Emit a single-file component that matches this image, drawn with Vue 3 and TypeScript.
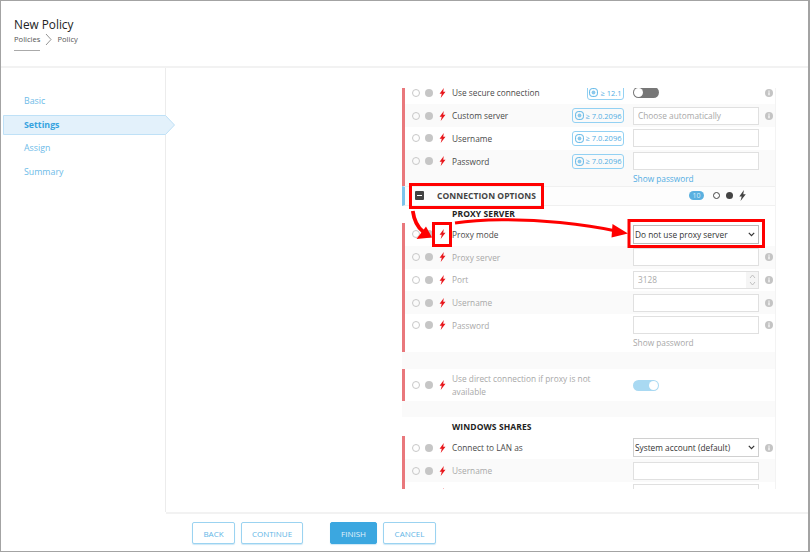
<script setup lang="ts">
interface Row {
  label: string
  muted?: boolean
  version?: string
  kind?: 'toggle-off' | 'placeholder' | 'input' | 'number' | 'select'
  value?: string
  info?: boolean
}

const nav: string[] = ['Basic', 'Settings', 'Assign', 'Summary']

const topRows: Row[] = [
  { label: 'Use secure connection', version: '≥ 12.1', kind: 'toggle-off', info: true },
  { label: 'Custom server', version: '≥ 7.0.2096', kind: 'placeholder', value: 'Choose automatically', info: true },
  { label: 'Username', version: '≥ 7.0.2096', kind: 'input' },
  { label: 'Password', version: '≥ 7.0.2096', kind: 'input' },
]

const proxyRows: Row[] = [
  { label: 'Proxy mode', kind: 'select', value: 'Do not use proxy server' },
  { label: 'Proxy server', muted: true, kind: 'input', info: true },
  { label: 'Port', muted: true, kind: 'number', value: '3128', info: true },
  { label: 'Username', muted: true, kind: 'input', info: true },
  { label: 'Password', muted: true, kind: 'input', info: true },
]

const shareRows: Row[] = [
  { label: 'Connect to LAN as', kind: 'select', value: 'System account (default)', info: true },
  { label: 'Username', muted: true, kind: 'input' },
  { label: 'Password', muted: true, kind: 'input' },
]
</script>

<template>
  <div class="window">
    <header class="head">
      <h1 class="title">New Policy</h1>
      <div class="crumbs">
        <span class="crumb-current">Policies</span>
        <svg class="crumb-sep" width="7" height="13" viewBox="0 0 7 13"><path d="M1 1 6 6.500 1 12" fill="none" stroke="#777" stroke-width=".8" /></svg>
        <span>Policy</span>
      </div>
    </header>

    <div class="middle">
      <nav class="side">
        <div v-for="item in nav" :key="item" class="nav-item" :class="{ active: item === 'Settings' }">
          <svg v-if="item === 'Settings'" class="nav-shape" width="173" height="20" viewBox="0 0 173 20">
            <path d="M.5.5H162.500L171.500 10 162.500 19.500H.5Z" fill="#e3f1fb" stroke="#bfe1f7" />
          </svg>
          <span class="nav-text">{{ item }}</span>
        </div>
      </nav>

      <main class="content">
        <section class="panel">
          <div class="scroller">
            <div class="group">
              <div v-for="(r, i) in topRows" :key="r.label" class="row" :class="{ alt: i % 2 === 1 }">
                <span class="radio"></span><span class="dot"></span>
                <svg class="bolt" width="7" height="10" viewBox="0 0 7 11"><path d="M4.900 0 .3 6.400H2.700L1.500 11 6.800 4.200H4.300Z" fill="#e8171c" /></svg>
                <span class="label">{{ r.label }}</span>
                <span class="version-slot">
                  <span class="version">
                    <svg width="9" height="9" viewBox="0 0 9 9"><rect x=".6" y=".6" width="7.800" height="7.800" rx="2.600" fill="none" stroke="#5ab4e6" /><circle cx="4.500" cy="4.500" r="1.900" fill="#8cc9ec" /></svg>
                    {{ r.version }}
                  </span>
                </span>
                <span class="value">
                  <span v-if="r.kind === 'toggle-off'" class="toggle off"><i></i></span>
                  <input v-else-if="r.kind === 'placeholder'" class="field" :placeholder="r.value" />
                  <input v-else class="field" />
                </span>
                <span class="info-slot">
                  <svg v-if="r.info" width="8" height="8" viewBox="0 0 8 8"><circle cx="4" cy="4" r="4" fill="#c4c4c4" /><rect x="3.400" y="3.300" width="1.200" height="3" fill="#fff" /><rect x="3.400" y="1.600" width="1.200" height="1.100" fill="#fff" /></svg>
                </span>
              </div>
              <div class="show-row alt first-show"><a class="show-link">Show password</a></div>
            </div>

            <div class="section-head">
              <span class="minus"><i></i></span>
              <span class="section-name">CONNECTION OPTIONS</span>
              <span class="count">10</span>
              <span class="head-radio"></span>
              <span class="head-dot"></span>
              <svg class="head-bolt" width="7" height="11" viewBox="0 0 7 11"><path d="M4.900 0 .3 6.400H2.700L1.500 11 6.800 4.200H4.300Z" fill="#444" /></svg>
            </div>

            <div class="subtitle proxy-title">PROXY SERVER</div>

            <div class="group">
              <div v-for="(r, i) in proxyRows" :key="r.label" class="row" :class="{ alt: i % 2 === 1 }">
                <span class="radio"></span><span class="dot"></span>
                <svg class="bolt" width="7" height="10" viewBox="0 0 7 11"><path d="M4.900 0 .3 6.400H2.700L1.500 11 6.800 4.200H4.300Z" fill="#e8171c" /></svg>
                <span class="label" :class="{ muted: r.muted }">{{ r.label }}</span>
                <span class="value">
                  <span v-if="r.kind === 'select'" class="select-wrap strong">
                    <select class="select"><option>{{ r.value }}</option></select>
                    <svg class="chev" width="7" height="5" viewBox="0 0 7 5"><path d="M.8.8 3.500 3.600 6.200.8" fill="none" stroke="#333" stroke-width="1.200" /></svg>
                  </span>
                  <span v-else-if="r.kind === 'number'" class="number-wrap">
                    <input class="field num" :value="r.value" />
                    <span class="spin">
                      <svg width="7" height="14" viewBox="0 0 7 14"><path d="M1 5 3.500 2 6 5M1 9l2.500 3L6 9" fill="none" stroke="#bbb" stroke-width=".9" /></svg>
                    </span>
                  </span>
                  <input v-else class="field" />
                </span>
                <span class="info-slot">
                  <svg v-if="r.info" width="8" height="8" viewBox="0 0 8 8"><circle cx="4" cy="4" r="4" fill="#c4c4c4" /><rect x="3.400" y="3.300" width="1.200" height="3" fill="#fff" /><rect x="3.400" y="1.600" width="1.200" height="1.100" fill="#fff" /></svg>
                </span>
              </div>
              <div class="show-row second-show"><a class="show-link dim">Show password</a></div>
            </div>

            <div class="blank"></div>

            <div class="group">
              <div class="row tall">
                <span class="radio"></span><span class="dot"></span>
                <svg class="bolt" width="7" height="10" viewBox="0 0 7 11"><path d="M4.900 0 .3 6.400H2.700L1.500 11 6.800 4.200H4.300Z" fill="#e8171c" /></svg>
                <span class="label muted wrap">Use direct connection if proxy is not available</span>
                <span class="value"><span class="toggle on"><i></i></span></span>
                <span class="info-slot"></span>
              </div>
            </div>

            <div class="blank small"></div>

            <div class="subtitle shares-title">WINDOWS SHARES</div>

            <div class="group">
              <div v-for="(r, i) in shareRows" :key="r.label" class="row" :class="{ alt: i % 2 === 1 }">
                <span class="radio"></span><span class="dot"></span>
                <svg class="bolt" width="7" height="10" viewBox="0 0 7 11"><path d="M4.900 0 .3 6.400H2.700L1.500 11 6.800 4.200H4.300Z" fill="#e8171c" /></svg>
                <span class="label" :class="{ muted: r.muted }">{{ r.label }}</span>
                <span class="value">
                  <span v-if="r.kind === 'select'" class="select-wrap">
                    <select class="select"><option>{{ r.value }}</option></select>
                    <svg class="chev" width="7" height="5" viewBox="0 0 7 5"><path d="M.8.8 3.500 3.600 6.200.8" fill="none" stroke="#333" stroke-width="1.200" /></svg>
                  </span>
                  <input v-else class="field" />
                </span>
                <span class="info-slot">
                  <svg v-if="r.info" width="8" height="8" viewBox="0 0 8 8"><circle cx="4" cy="4" r="4" fill="#c4c4c4" /><rect x="3.400" y="3.300" width="1.200" height="3" fill="#fff" /><rect x="3.400" y="1.600" width="1.200" height="1.100" fill="#fff" /></svg>
                </span>
              </div>
            </div>
          </div>
        </section>
      </main>
    </div>

    <footer class="foot">
      <button class="btn back">BACK</button>
      <button class="btn cont">CONTINUE</button>
      <button class="btn primary">FINISH</button>
      <button class="btn cancel">CANCEL</button>
    </footer>

    <svg class="marks" width="810" height="552" viewBox="0 0 810 552">
      <g fill="none" stroke="#f00">
        <rect x="410.500" y="184.500" width="132" height="23" stroke-width="3" />
        <rect x="433.500" y="223.500" width="17" height="22" stroke-width="3" />
        <rect x="629" y="220.500" width="134.500" height="26" stroke-width="3" />
        <path d="M412.800 211C414 220 417 227 423.500 232" stroke-width="3.800" />
        <path d="M455 223C480 219 520 218.500 560 222.500C580 224.500 600 227.500 616 231" stroke-width="3" />
      </g>
      <path d="M432 237.500 416.500 239 426 226.500Z" fill="#f00" />
      <path d="M628 233.500 612.500 224 611.500 237.500Z" fill="#f00" />
    </svg>
  </div>
</template>

<style>
html, body { margin: 0; background: #fff; }
</style>

<style scoped>
.window {
  position: relative;
  box-sizing: border-box;
  width: 810px;
  height: 552px;
  display: flex;
  flex-direction: column;
  overflow: hidden;
  background: #fff;
  border: 1px solid #a3a3a3;
  border-right-width: 2px;
  font-family: "Open Sans", "Noto Sans", sans-serif;
  font-size: 8.300px;
  color: #444;
}
.head {
  box-sizing: border-box;
  height: 67px;
  flex: none;
  padding: 14px 0 0 13px;
  border-bottom: 2px solid #f2f2f2;
}
.title {
  margin: 0;
  font-size: 11.800px;
  font-weight: 400;
  line-height: 18px;
  color: #222;
}
.crumbs {
  display: flex;
  align-items: center;
  gap: 5px;
  height: 14px;
  margin-top: -1px;
  font-size: 7.600px;
  color: #555;
}
.crumb-current {
  position: relative;
}
.crumb-current::after {
  content: "";
  position: absolute;
  left: 0;
  right: 0;
  top: 16px;
  height: 1px;
  background: #aaa;
}
.middle {
  flex: 1;
  display: flex;
  min-height: 0;
}
.side {
  box-sizing: border-box;
  width: 165px;
  flex: none;
  padding-top: 21.300px;
  border-right: 1px solid #ececec;
}
.nav-item {
  position: relative;
  height: 23.500px;
  display: flex;
  align-items: center;
  padding-left: 23px;
  font-size: 8.800px;
  color: #6dbbe8;
}
.nav-item.active {
  color: #36a3e0;
  font-weight: 700;
}
.nav-shape {
  position: absolute;
  left: 2px;
  top: 2px;
}
.nav-text {
  position: relative;
}
.content {
  flex: 1;
  min-width: 0;
  padding: 20px 0 0 236px;
}
.panel {
  box-sizing: border-box;
  width: 374px;
  height: 401px;
  overflow: hidden;
  border-right: 1px solid #f3f3f3;
}
.scroller {
  margin-top: -6.400px;
}
.group {
  border-left: 3px solid #e9787c;
}
.row {
  box-sizing: border-box;
  height: 22.750px;
  display: flex;
  align-items: center;
  padding-left: 7px;
}
.row.tall {
  height: 32px;
}
.row.alt, .show-row.alt {
  background: #fafafa;
}
.radio {
  box-sizing: border-box;
  width: 8px;
  height: 8px;
  border: 1px solid #c8c8c8;
  border-radius: 50%;
  flex: none;
}
.dot {
  width: 8px;
  height: 8px;
  margin-left: 5px;
  border-radius: 50%;
  background: #c6c6c6;
  flex: none;
}
.bolt {
  margin-left: 6px;
  flex: none;
}
.label {
  margin-left: 6px;
  flex: none;
  white-space: nowrap;
  color: #4a4a4a;
}
.label.muted {
  color: #a8a8a8;
}
.label.wrap {
  width: 150px;
  white-space: normal;
  line-height: 13px;
}
.version-slot {
  margin-left: auto;
  flex: none;
  margin-right: 9px;
}
.version {
  box-sizing: border-box;
  display: inline-flex;
  align-items: center;
  gap: 2px;
  height: 15px;
  padding: 0 1.500px;
  border: 1px solid #93d1f3;
  border-radius: 3px;
  font-size: 7.500px;
  color: #52ade3;
}
.value {
  margin-left: auto;
  width: 126px;
  flex: none;
  display: flex;
  align-items: center;
}
.version-slot + .value {
  margin-left: 0;
}
.info-slot {
  width: 14px;
  flex: none;
  display: flex;
  justify-content: flex-end;
  margin-right: 2px;
}
.field {
  box-sizing: border-box;
  width: 126px;
  height: 18px;
  padding: 0 4px;
  border: 1px solid #e0e0e0;
  border-radius: 0;
  outline: none;
  background: #fff;
  font: inherit;
  color: #aaa;
}
.field::placeholder {
  color: #a8a8a8;
  opacity: 1;
}
.toggle {
  position: relative;
  display: block;
  width: 26px;
  height: 11px;
  border-radius: 6px;
}
.toggle i {
  position: absolute;
  top: 1px;
  width: 9px;
  height: 9px;
  border-radius: 50%;
  background: #fff;
}
.toggle.off {
  background: #777;
}
.toggle.off i {
  left: 1px;
}
.toggle.on {
  background: #a9d9f2;
}
.toggle.on i {
  right: 1px;
}
.select-wrap {
  position: relative;
  display: block;
  width: 126px;
  height: 19px;
}
.select {
  box-sizing: border-box;
  display: block;
  width: 100%;
  height: 100%;
  padding: 0 1px;
  border: 1px solid #d0d0d0;
  border-radius: 0;
  outline: none;
  appearance: none;
  background: #fff;
  font: inherit;
  color: #333;
}
.strong .select {
  border-color: #bbb;
}
.chev {
  position: absolute;
  right: 4px;
  top: 7px;
}
.number-wrap {
  position: relative;
  display: block;
  width: 126px;
  height: 18px;
}
.spin {
  position: absolute;
  right: 1px;
  top: 1px;
  bottom: 1px;
  width: 12px;
  display: flex;
  align-items: center;
  justify-content: center;
  background: #f5f5f5;
}
.show-row {
  box-sizing: border-box;
  padding-left: 228px;
  line-height: 12px;
}
.first-show {
  height: 13.800px;
}
.second-show {
  height: 15.650px;
}
.show-link {
  color: #52ade3;
}
.show-link.dim {
  color: #a8a8a8;
}
.section-head {
  box-sizing: border-box;
  height: 20px;
  display: flex;
  align-items: center;
  padding: 0 0 1px 10px;
  border-left: 3px solid #7cc4ec;
  border-top: 1px solid #f0f0f0;
  border-bottom: 1px solid #f0f0f0;
  background: #fdfdfd;
}
.minus {
  width: 9px;
  height: 9px;
  border-radius: 1px;
  background: #444;
  display: flex;
  align-items: center;
  justify-content: center;
  flex: none;
}
.minus i {
  display: block;
  width: 5px;
  height: 1px;
  background: #fff;
}
.section-name {
  margin-left: 13px;
  font-weight: 700;
  font-size: 8.500px;
  letter-spacing: .05px;
  color: #444;
}
.count {
  margin-left: auto;
  width: 15px;
  height: 9px;
  border-radius: 5px;
  background: #5ab0e0;
  color: #d8eefa;
  font-size: 7px;
  line-height: 9px;
  text-align: center;
}
.head-radio {
  box-sizing: border-box;
  width: 7px;
  height: 7px;
  margin-left: 9px;
  border: 1px solid #444;
  border-radius: 50%;
}
.head-dot {
  width: 7px;
  height: 7px;
  margin-left: 6px;
  border-radius: 50%;
  background: #444;
}
.head-bolt {
  margin: 0 29px 0 6px;
}
.subtitle {
  padding-left: 50px;
  font-size: 8.500px;
  font-weight: 700;
  letter-spacing: .1px;
  color: #222;
}
.proxy-title {
  height: 16.600px;
  line-height: 15px;
}
.shares-title {
  height: 19px;
  line-height: 19px;
}
.blank {
  height: 17px;
  background: #fafafa;
}
.blank.small {
  height: 16px;
}
.foot {
  box-sizing: border-box;
  height: 39px;
  flex: none;
  margin-left: 165px;
  display: flex;
  align-items: flex-start;
  padding: 8px 0 0 26px;
  border-top: 2px solid #f2f2f2;
}
.btn {
  box-sizing: border-box;
  height: 22px;
  padding: 0;
  border: 1px solid #9bd3f1;
  border-radius: 2px;
  background: #fff;
  font-family: inherit;
  font-size: 8px;
  color: #62b5e6;
  box-shadow: 0 1px 1px rgba(60, 160, 220, .25);
}
.btn.back { width: 43px; }
.btn.cont { width: 62px; margin-left: 6px; }
.btn.primary {
  width: 47px;
  margin-left: 27px;
  background: #3ba7e0;
  border-color: #3ba7e0;
  color: #e2f2fb;
}
.btn.cancel { width: 53px; margin-left: 6px; }
.marks {
  position: absolute;
  left: -1px;
  top: -1px;
  pointer-events: none;
}
</style>
